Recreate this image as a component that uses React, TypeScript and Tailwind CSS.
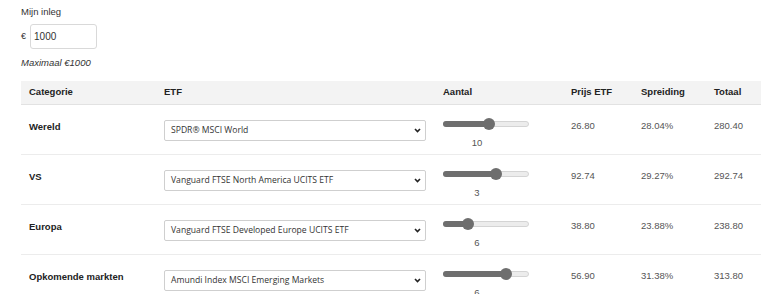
import React from "react";

const rows = [
  { cat: "Wereld", etf: "SPDR® MSCI World", n: 10, pct: 54, price: "26.80", spread: "28.04%", total: "280.40" },
  { cat: "VS", etf: "Vanguard FTSE North America UCITS ETF", n: 3, pct: 63, price: "92.74", spread: "29.27%", total: "292.74" },
  { cat: "Europa", etf: "Vanguard FTSE Developed Europe UCITS ETF", n: 6, pct: 26, price: "38.80", spread: "23.88%", total: "238.80" },
  { cat: "Opkomende markten", etf: "Amundi Index MSCI Emerging Markets", n: 6, pct: 77, price: "56.90", spread: "31.38%", total: "313.80" },
];

function Slider({ pct }: { pct: number }) {
  const left = `calc(${pct / 100} * (100% - 12px))`;
  const fill = `calc(${pct / 100} * (100% - 12px) + 6px)`;
  return (
    <div className="relative h-[10px] w-[86px]">
      <div className="absolute left-0 right-0 top-[2px] h-[6px] rounded-full border border-[#d4d4d4] bg-[#ececec]" />
      <div className="absolute left-0 top-[2px] h-[6px] rounded-full bg-[#6e6e6e]" style={{ width: fill }} />
      <div className="absolute top-[-1px] h-[12px] w-[12px] rounded-full bg-[#6e6e6e]" style={{ left }} />
    </div>
  );
}

function Select({ text }: { text: string }) {
  return (
    <div className="flex h-[21px] w-[262px] items-center justify-between rounded-[2px] border border-[#cfcfcf] bg-white pl-[6px] pr-[4px]">
      <span className="text-[8.6px] text-[#333]" style={{ fontFamily: '"Open Sans", "Noto Sans", sans-serif' }}>
        {text}
      </span>
      <svg width="7" height="5" viewBox="0 0 7 5">
        <path d="M1 1 L3.5 3.6 L6 1" fill="none" stroke="#222" strokeWidth="1.6" />
      </svg>
    </div>
  );
}

export default function App() {
  const cols = "grid grid-cols-[135px_279px_128px_70px_73px_55px]";
  return (
    <div
      className="w-[768px] h-[294px] overflow-hidden bg-white pl-[21px] pt-[5px] text-[9.5px] text-[#333]"
      style={{ fontFamily: '"Liberation Sans", Arial, sans-serif' }}
    >
      <div className="leading-[14px]">Mijn inleg</div>
      <div className="mt-[5px] flex items-center gap-[4px]">
        <span className="text-[9px]">€</span>
        <div className="flex h-[25px] w-[67px] items-center rounded-[3px] border border-[#d9d9d9] pl-[3px] text-[10px] text-[#333]">
          1000
        </div>
      </div>
      <div className="mt-[7px] leading-[14px] italic">Maximaal €1000</div>

      <div className="mt-[11px] w-[740px]">
        <div className={`${cols} h-[24px] items-center border-b border-[#e2e2e2] bg-[#f3f3f3] font-bold text-[#222]`}>
          <div className="pl-[8px]">Categorie</div>
          <div className="pl-[8px]">ETF</div>
          <div className="pl-[8px]">Aantal</div>
          <div className="pl-[8px]">Prijs ETF</div>
          <div className="pl-[8px]">Spreiding</div>
          <div className="pl-[8px]">Totaal</div>
        </div>
        {rows.map((r) => (
          <div key={r.cat} className={`${cols} h-[50px] border-b border-[#ececec]`}>
            <div className="pl-[8px] pt-[14px] font-bold leading-[16px] text-[#222]">{r.cat}</div>
            <div className="pl-[8px] pt-[15px]">
              <Select text={r.etf} />
            </div>
            <div className="pl-[8px] pt-[14px]">
              <Slider pct={r.pct} />
              <div className="mt-[7px] w-[68px] text-center leading-[14px] text-[#555]">{r.n}</div>
            </div>
            <div className="pl-[8px] pt-[14px] leading-[14px] text-[#555]">{r.price}</div>
            <div className="pl-[8px] pt-[14px] leading-[14px] text-[#555]">{r.spread}</div>
            <div className="pl-[8px] pt-[14px] leading-[14px] text-[#555]">{r.total}</div>
          </div>
        ))}
      </div>
    </div>
  );
}
